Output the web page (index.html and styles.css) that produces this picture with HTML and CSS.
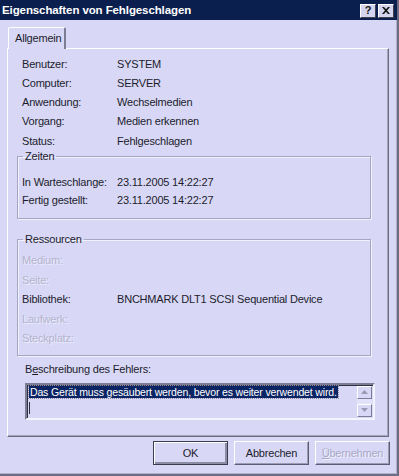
FILE: index.html
```html
<!DOCTYPE html>
<html lang="de">
<head>
<meta charset="utf-8">
<title>Eigenschaften von Fehlgeschlagen</title>
<link rel="stylesheet" href="styles.css">
</head>
<body>
<div class="window">
  <div class="titlebar">
    <span class="title">Eigenschaften von Fehlgeschlagen</span>
    <div class="tbtns">
      <span class="tbtn">?</span>
      <span class="tbtn close">
        <svg width="8" height="7" viewBox="0 0 8 7"><path d="M0 0h2l2 2.2L6 0h2L5 3.5 8 7H6L4 4.8 2 7H0l3-3.5z" fill="#111"/></svg>
      </span>
    </div>
  </div>
  <div class="content">
    <div class="tabs"><div class="tab">Allgemein</div></div>
    <div class="panel">
      <div class="rows main">
        <span class="lbl">Benutzer:</span><span class="val">SYSTEM</span>
        <span class="lbl">Computer:</span><span class="val">SERVER</span>
        <span class="lbl">Anwendung:</span><span class="val">Wechselmedien</span>
        <span class="lbl">Vorgang:</span><span class="val">Medien erkennen</span>
        <span class="lbl">Status:</span><span class="val">Fehlgeschlagen</span>
      </div>
      <fieldset class="group zeiten">
        <legend>Zeiten</legend>
        <div class="rows times">
          <span class="lbl">In Warteschlange:</span><span class="val">23.11.2005 14:22:27</span>
          <span class="lbl">Fertig gestellt:</span><span class="val">23.11.2005 14:22:27</span>
        </div>
      </fieldset>
      <fieldset class="group res">
        <legend>Ressourcen</legend>
        <div class="rows resrows">
          <span class="lbl dis">Medium:</span><span class="val"></span>
          <span class="lbl dis">Seite:</span><span class="val"></span>
          <span class="lbl">Bibliothek:</span><span class="val">BNCHMARK DLT1 SCSI Sequential Device</span>
          <span class="lbl dis">Laufwerk:</span><span class="val"></span>
          <span class="lbl dis">Steckplatz:</span><span class="val"></span>
        </div>
      </fieldset>
      <div class="desc-label">B<u>e</u>schreibung des Fehlers:</div>
      <div class="textbox">
        <div class="textarea">
          <div class="line"><span class="sel">Das Gerät muss gesäubert werden, bevor es weiter verwendet wird.</span></div>
          <div class="line"><span class="caret"></span></div>
        </div>
        <div class="scrollbar">
          <span class="sbtn"><svg width="7" height="4" viewBox="0 0 7 4"><path d="M0 4h7L3.5 0z" fill="#9a9ab4"/></svg></span>
          <span class="track"></span>
          <span class="sbtn"><svg width="7" height="4" viewBox="0 0 7 4"><path d="M0 0h7L3.5 4z" fill="#9a9ab4"/></svg></span>
        </div>
      </div>
    </div>
    <div class="buttons">
      <span class="btn default">OK</span>
      <span class="btn">Abbrechen</span>
      <span class="btn disabled"><u>Ü</u>bernehmen</span>
    </div>
  </div>
</div>
</body>
</html>
```
FILE: styles.css
```css
html, body {
  margin: 0;
  padding: 0;
  background: #d8d8f6;
}
body {
  width: 399px;
  height: 476px;
  overflow: hidden;
  font-family: "Liberation Sans", Arial, sans-serif;
  font-size: 11px;
  letter-spacing: -0.2px;
  color: #1c1c2c;
}
.window {
  box-sizing: border-box;
  width: 399px;
  height: 476px;
  background: #d8d8f6;
  border-right: 2px solid #6c6c84;
  border-bottom: 2px solid #6c6c84;
  box-shadow: inset -1px -1px 0 #b0b0c8;
  display: flex;
  flex-direction: column;
}
.titlebar {
  height: 20px;
  background: #0b1f4e;
  display: flex;
  align-items: center;
  justify-content: space-between;
  padding: 0 3px 0 2px;
}
.title {
  color: #fff;
  font-weight: bold;
  font-size: 11.5px;
  letter-spacing: -0.1px;
}
.tbtns {
  display: flex;
  gap: 2px;
  margin-top: 1px;
}
.tbtn {
  box-sizing: border-box;
  width: 16px;
  height: 14px;
  background: #d4d4ee;
  border: 1px solid;
  border-color: #fff #404050 #404050 #fff;
  display: flex;
  align-items: center;
  justify-content: center;
  font-weight: bold;
  font-size: 11px;
  color: #111;
  line-height: 1;
}
.content {
  padding: 7px 8px 0 7px;
  display: flex;
  flex-direction: column;
}
.tabs {
  display: flex;
  height: 21px;
  position: relative;
  z-index: 1;
}
.tab {
  box-sizing: border-box;
  margin-left: 1px;
  width: 58px;
  height: 22px;
  background: #d8d8f6;
  border-top: 1px solid #fff;
  border-left: 1px solid #fff;
  border-right: 2px solid #7c7c94;
  border-radius: 2px 2px 0 0;
  padding: 4px 0 0 6px;
  line-height: 13px;
}
.panel {
  box-sizing: border-box;
  height: 389px;
  border: 1px solid;
  border-color: #fff #6c6c84 #6c6c84 #fff;
  box-shadow: inset -1px -1px 0 #a4a4bc;
  padding-top: 5px;
  display: flex;
  flex-direction: column;
}
.rows {
  display: grid;
  grid-template-columns: 95px 1fr;
  align-items: center;
  white-space: nowrap;
}
.main {
  margin-left: 14px;
  grid-auto-rows: 19.25px;
}
.val { color: #1c1c2c; }
.dis { color: #b4b4cc; text-shadow: 1px 1px 0 #ececff; }
.group {
  margin: 0 17px 0 9px;
  padding: 0 4px;
  border: 1px solid #a6a6c0;
  box-shadow: 1px 1px 0 #f0f0ff, inset 1px 1px 0 #f0f0ff;
  min-inline-size: 0;
}
.group legend {
  padding: 0 2px;
  margin-left: 1px;
  line-height: 13px;
  font-size: 11px;
}
.zeiten { margin-top: 0; }
.times {
  grid-auto-rows: 18.5px;
  padding: 9px 0 9px;
}
.res { margin-top: 14px; }
.resrows {
  grid-auto-rows: 19.5px;
  padding: 4px 0 7px;
}
.desc-label {
  margin: 7px 0 0 17px;
  line-height: 13px;
}
.textbox {
  box-sizing: border-box;
  margin: 7px 13px 0 17px;
  height: 37px;
  border: 2px solid;
  border-color: #7c7c94 #f4f4ff #f4f4ff #7c7c94;
  box-shadow: inset 1px 1px 0 #303040;
  display: flex;
}
.textarea {
  flex: 1;
  padding: 1px 0 0 2px;
}
.line {
  height: 13px;
  line-height: 13px;
  white-space: nowrap;
}
.sel {
  background: #0b2464;
  color: #fff;
  outline: 1px dotted #8a8aa8;
  padding: 0 1px;
  font-size: 10.5px;
  letter-spacing: -0.15px;
}
.caret {
  display: inline-block;
  width: 1px;
  height: 12px;
  margin-top: 3px;
  background: #303040;
  vertical-align: top;
}
.scrollbar {
  width: 15px;
  display: flex;
  flex-direction: column;
  padding: 1px 1px 1px 0;
}
.sbtn {
  box-sizing: border-box;
  height: 13px;
  border: 1px solid;
  border-color: #fff #7c7c94 #7c7c94 #fff;
  background: #d8d8f6;
  display: flex;
  align-items: center;
  justify-content: center;
}
.track {
  flex: 1;
  background: #e2e2fa;
}
.buttons {
  display: flex;
  justify-content: flex-end;
  gap: 6px;
  margin-top: 4px;
  margin-right: -1px;
}
.btn {
  box-sizing: border-box;
  width: 75px;
  height: 24px;
  border: 1px solid;
  border-color: #fff #5c5c74 #5c5c74 #fff;
  box-shadow: inset -1px -1px 0 #9c9cb4;
  display: flex;
  align-items: center;
  justify-content: center;
  background: #d8d8f6;
}
.btn.default {
  border: 1px solid #3c3c50;
  box-shadow: inset 1px 1px 0 #fff, inset -2px -2px 0 #8c8ca4;
}
.btn.disabled {
  color: #a8a8c4;
  text-shadow: 1px 1px 0 #f0f0ff;
}
.btn.disabled u { text-decoration-color: #a8a8c4; }
```
